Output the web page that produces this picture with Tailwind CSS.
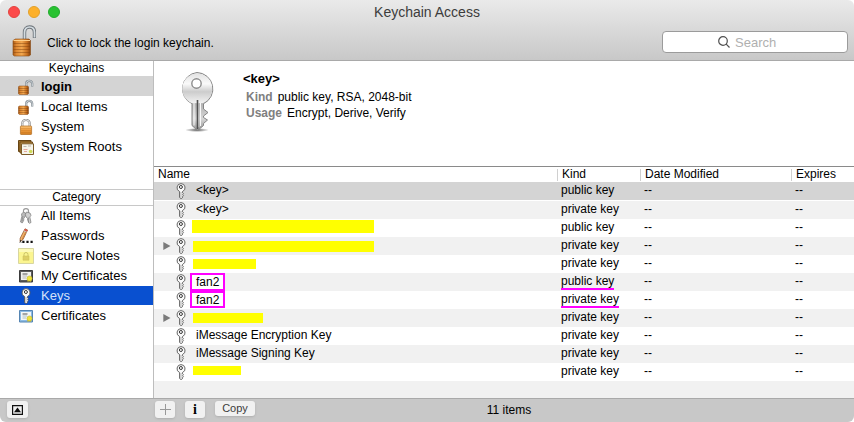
<!DOCTYPE html>
<html lang="en">
<head>
<meta charset="utf-8">
<meta name="viewport" content="width=device-width, initial-scale=1">
<title>Keychain Access</title>
<script src="https://cdn.jsdelivr.net/npm/@tailwindcss/browser@4"></script>
</head>
<body class="bg-white font-['Liberation_Sans',Arial,sans-serif] text-xs text-black">
<svg class="absolute size-0" aria-hidden="true">
  <defs>
    <linearGradient id="gold" x1="0" x2="1" y1="0" y2="0">
      <stop offset="0" stop-color="#a85a16"/><stop offset=".2" stop-color="#e08a34"/><stop offset=".5" stop-color="#f2a850"/><stop offset=".8" stop-color="#c87020"/><stop offset="1" stop-color="#84400c"/>
    </linearGradient>
    <linearGradient id="brass" x1="0" x2="0" y1="0" y2="1">
      <stop offset="0" stop-color="#fbc478"/><stop offset=".5" stop-color="#ee9b3c"/><stop offset="1" stop-color="#d07c20"/>
    </linearGradient>
    <linearGradient id="steel" x1="0" x2="0" y1="0" y2="1">
      <stop offset="0" stop-color="#e8e8e8"/><stop offset=".35" stop-color="#fafafa"/><stop offset=".55" stop-color="#b4b4b4"/><stop offset=".8" stop-color="#d6d6d6"/><stop offset="1" stop-color="#909090"/>
    </linearGradient>
    <linearGradient id="head" x1="0" x2="0" y1="0" y2="1">
      <stop offset="0" stop-color="#e2e2e2"/><stop offset=".35" stop-color="#fafafa"/><stop offset=".62" stop-color="#cccccc"/><stop offset="1" stop-color="#f2f2f2"/>
    </linearGradient>
    <radialGradient id="shade"><stop offset="0" stop-color="#333" stop-opacity=".8"/><stop offset="1" stop-color="#333" stop-opacity="0"/></radialGradient>
    <symbol id="open-lock" viewBox="0 0 24 32">
      <path d="M12.500 15V7.500C12.500 3.700 14.500 2 17.500 2s5 2 5 5.500V13" fill="none" stroke="#6d747a" stroke-width="3.400"/>
      <path d="M12.500 15V7.500C12.500 3.700 14.500 2 17.500 2s5 2 5 5.500V12.500" fill="none" stroke="#d3dbe0" stroke-width="1.700"/>
      <path d="M1 15.500 3.500 14H17l1.500 1.500v14.500L17 31H2.500L1 30z" fill="url(#gold)" stroke="#8a4a12" stroke-width=".6"/>
      <path d="M1.500 18.500h16.500M1.500 21.500h16.500M1.500 24.500h16.500M1.500 27.500h16.500" stroke="#7d3f0c" stroke-opacity=".45"/>
      <path d="M1.500 15.500h16.500" stroke="#ffd08a"/>
    </symbol>
    <symbol id="small-open-lock" viewBox="0 0 16 16">
      <path d="M8.200 7.500V4.500C8.200 2.600 9.500 1.800 11.200 1.800s3 .9 3 2.700V7.500" fill="none" stroke="#7c858c" stroke-width="2.200"/>
      <path d="M8.200 7.500V4.500C8.200 2.600 9.500 1.800 11.200 1.800s3 .9 3 2.700V7" fill="none" stroke="#dfe5e9" stroke-width="1"/>
      <path d="M.4 7.700 1.500 7h8l1 .7v7l-1 .8H1.500l-1.100-.8z" fill="url(#gold)" stroke="#8a4a12" stroke-width=".5"/>
      <path d="M.6 9.500h9.700M.6 11.500h9.700M.6 13.500h9.700" stroke="#7d3f0c" stroke-opacity=".5" stroke-width=".8"/>
    </symbol>
    <symbol id="closed-lock" viewBox="0 0 16 16">
      <path d="M4.300 8V4.500a3.700 3.700 0 0 1 7.400 0V8" fill="none" stroke="#8b8b8b" stroke-width="2.200"/>
      <path d="M4.300 8V4.500a3.700 3.700 0 0 1 7.400 0V8" fill="none" stroke="#ececec" stroke-width="1"/>
      <rect x="2.400" y="7" width="11.200" height="8.500" rx=".7" fill="url(#brass)" stroke="#b06a1c" stroke-width=".7"/>
      <path d="M3 9.500h10M3 11.500h10M3 13.500h10" stroke="#b8681a" stroke-opacity=".4" stroke-width=".7"/>
    </symbol>
    <symbol id="roots" viewBox="0 0 16 16">
      <path d="M.5 1.500h12.500v11H.5z" fill="#a4762c" stroke="#664414"/>
      <path d="M2 3h12.500v11H2z" fill="#bd8f42" stroke="#6e4a18"/>
      <path d="M3.500 4.800h12V15.500h-12z" fill="#f6f4ea" stroke="#7c5c28"/>
      <path d="M5.500 7.500h3M10 7h3" stroke="#b9b9b0"/><path d="M5.500 10.500h4M6 12.500h3" stroke="#e6a89c"/>
      <circle cx="12.700" cy="12.500" r="1.800" fill="#cedb58"/>
    </symbol>
    <symbol id="keyring" viewBox="0 0 16 16">
      <circle cx="8" cy="3.200" r="2.600" fill="none" stroke="#999" stroke-width="1.100"/>
      <path d="M5.500 4 3.500 6 3.800 8.500 2.500 14l1.700 1 1-1.300-.3-1 1-.4-.2-1.600 1.300-2L8 5.500z" fill="#bcbcbc" stroke="#808080" stroke-width=".7"/>
      <path d="M8.500 4 12 5l1 2.300-1.200 1.700 1.200 5.500-1.700.8-1.300-1.300.5-1-1-.7.2-2L8 9 7.300 6.500z" fill="#cfcfcf" stroke="#777" stroke-width=".7"/>
      <path d="M10.500 9.500v4.500M5 8 3.800 13.500" stroke="#777" stroke-width=".6"/>
    </symbol>
    <symbol id="pencil" viewBox="0 0 16 16">
      <path d="m7 .8 2.600 1.200L5 11.500l-3 2.300.2-3.600z" fill="#f0b36c" stroke="#8d4d24" stroke-width=".7"/>
      <path d="m7 .8 2.600 1.200-.9 1.900-2.600-1.200z" fill="#d9584e"/>
      <path d="m6 2.900 2.600 1.200" stroke="#c4c4c4"/><path d="m4.200 11.200 3.700-7.500" stroke="#c9762e" stroke-width=".7"/><path d="m2 13.900.1-1.900 1.500.7z" fill="#222"/>
      <path d="M1 14.500h3" stroke="#aaa" stroke-width=".8"/>
      <path d="M4.300 12.700h2.200v2.200H4.300zM8.400 12.700h2.200v2.200H8.400zM12.500 12.700h2.200v2.200h-2.200z" fill="#111"/>
    </symbol>
    <symbol id="note" viewBox="0 0 16 16">
      <path d="M.5.500h15v15H.5z" fill="#fbf590" stroke="#d8d6a0"/>
      <path d="M1 1h14v3H1z" fill="#fdfab8"/>
      <path d="M6 8V6.500a2 2 0 0 1 4 0V8" fill="none" stroke="#c9c268"/>
      <path d="M5 8h6v4.200H5z" fill="#ddcf66" stroke="#c8bc55" stroke-width=".5"/>
    </symbol>
    <symbol id="my-cert" viewBox="0 0 16 16">
      <path d="M1.500 2.500h13v11.500h-13z" fill="#5c5c5c" stroke="#3c3c3c"/>
      <path d="M3 4h10v8H3z" fill="#f1f1ee"/>
      <path d="M4.500 6h5" stroke="#555"/><path d="M4.500 8h4.500M4.500 10h3.500" stroke="#aaa" stroke-width=".8"/>
      <path d="m9.800 11-.3 3 1.700-1 1.800 1-.3-3z" fill="#c9b72c"/><circle cx="11.500" cy="10.500" r="2.600" fill="#eee33c" stroke="#b5a52c" stroke-width=".5"/>
    </symbol>
    <symbol id="cert" viewBox="0 0 16 16">
      <path d="M1.500 2.500h13v11.500h-13z" fill="#8dbbe4" stroke="#5585b3"/>
      <path d="M3 4h10v8H3z" fill="#f4f7f6"/>
      <path d="M4.500 6h5" stroke="#555"/><path d="M4.500 8h4.500M4.500 10h3.500" stroke="#9fb4bd" stroke-width=".8"/>
      <path d="m9.800 11-.3 3 1.700-1 1.800 1-.3-3z" fill="#c9b72c"/><circle cx="11.500" cy="10.500" r="2.600" fill="#eee33c" stroke="#b5a52c" stroke-width=".5"/>
    </symbol>
    <symbol id="key" viewBox="0 0 10 16">
      <path d="M5 .6a4.100 4.100 0 0 1 1.500 7.900v1.300l.9.900-.8 1 .8 1.100-.9.900v.9L5.100 15.600 3.600 14.500v-6A4.100 4.100 0 0 1 5 .6z" fill="#fafafa" stroke="#555" stroke-width=".9"/>
      <circle cx="4.900" cy="4" r="1.500" fill="#fff" stroke="#333" stroke-width="1"/>
      <path d="M5 9v5" stroke="#8a8a8a" stroke-width=".6"/>
    </symbol>
    <symbol id="big-key" viewBox="0 0 36 62">
      <ellipse cx="18" cy="59" rx="12" ry="2" fill="url(#shade)"/>
      <path d="M18 1.500a16.400 16.400 0 0 1 6.500 31.200V38l4.500 3.500-4.500 3.500v1.500l4 2.500-4 3.500v2L18.500 59.500 13 54.500V32.700A16.400 16.400 0 0 1 18 1.500z" fill="url(#steel)" stroke="#858585"/>
      <path d="M18 2.500a15.400 15.400 0 0 1 6 29.500H12.500A15.400 15.400 0 0 1 18 2.500z" fill="url(#head)"/>
      <path d="M15 32v22.500M21.500 32v23" stroke="#f8f8f8"/>
      <path d="M18.500 29v29" stroke="#505050" stroke-width="1.600"/><path d="M20 32v24" stroke="#bcbcbc"/>
      <circle cx="17.500" cy="12.500" r="4.700" fill="#fff" stroke="#8c8c8c" stroke-width="1.400"/>
    </symbol>
  </defs>
</svg>

<div class="flex h-screen flex-col overflow-hidden rounded-md bg-white">
  <header class="flex-none border-b border-[#a9a9a9] bg-linear-to-b from-[#eaeaea] to-[#c8c8c8]">
    <div class="grid h-6 grid-cols-3 items-center">
      <div class="flex gap-2 pl-2">
        <button aria-label="Close" class="size-3 rounded-full border border-[#e2443f] bg-[#fc4a4a]"></button>
        <button aria-label="Minimize" class="size-3 rounded-full border border-[#e2a02b] bg-[#fdb02a]"></button>
        <button aria-label="Zoom" class="size-3 rounded-full border border-[#20ab2c] bg-[#28c231]"></button>
      </div>
      <h1 class="text-center text-sm leading-6 text-[#3c3c3c]">Keychain Access</h1>
    </div>
    <div class="flex h-9 items-center justify-between pr-1.5 pl-3">
      <button class="flex items-center gap-[11px] pb-0.5">
        <svg class="h-8 w-6" aria-hidden="true"><use href="#open-lock"/></svg>
        <span class="pt-1">Click to lock the login keychain.</span>
      </button>
      <div class="relative">
        <svg class="absolute top-[5px] left-14 size-3" viewBox="0 0 12 12" fill="none" stroke="#505050" stroke-width="1.200" aria-hidden="true"><circle cx="5" cy="5" r="4.300"/><path d="m8.200 8.200 3.300 3.300"/></svg>
        <input type="search" aria-label="Search" placeholder="Search" class="block h-[22px] w-[186px] rounded-[4px] border border-[#9b9b9b] bg-white pl-[72px] text-[13px] outline-none placeholder:text-[#b0b0b0]">
      </div>
    </div>
  </header>

  <div class="flex min-h-0 flex-1">
    <nav class="flex w-[154px] flex-none flex-col border-r border-[#bdbdbd] text-[13px] leading-5">
      <section class="h-32">
        <h2 class="text-center text-xs leading-[15px]">Keychains</h2>
        <ul>
          <li><button class="flex h-5 w-full items-center gap-[7px] bg-[#d4d4d4] pt-px pl-[18px] font-bold"><svg class="size-4" aria-hidden="true"><use href="#small-open-lock"/></svg>login</button></li>
          <li><button class="flex h-5 w-full items-center gap-[7px] pt-px pl-[18px]"><svg class="size-4" aria-hidden="true"><use href="#small-open-lock"/></svg>Local Items</button></li>
          <li><button class="flex h-5 w-full items-center gap-[7px] pt-px pl-[18px]"><svg class="size-4" aria-hidden="true"><use href="#closed-lock"/></svg>System</button></li>
          <li><button class="flex h-5 w-full items-center gap-[7px] pt-px pl-[18px]"><svg class="size-4" aria-hidden="true"><use href="#roots"/></svg>System Roots</button></li>
        </ul>
      </section>
      <section>
        <h2 class="border-y border-[#c8c8c8] text-center text-xs leading-[15px]">Category</h2>
        <ul>
          <li><button class="flex h-5 w-full items-center gap-[7px] pl-[18px]"><svg class="size-4" aria-hidden="true"><use href="#keyring"/></svg>All Items</button></li>
          <li><button class="flex h-5 w-full items-center gap-[7px] pl-[18px]"><svg class="size-4" aria-hidden="true"><use href="#pencil"/></svg>Passwords</button></li>
          <li><button class="flex h-5 w-full items-center gap-[7px] pl-[18px]"><svg class="size-4" aria-hidden="true"><use href="#note"/></svg>Secure Notes</button></li>
          <li><button class="flex h-5 w-full items-center gap-[7px] pl-[18px]"><svg class="size-4" aria-hidden="true"><use href="#my-cert"/></svg>My Certificates</button></li>
          <li><button class="flex h-5 w-full items-center gap-[7px] border-b border-white bg-[#0950d0] pl-[18px] text-[#d5e2fa]"><svg class="size-4" aria-hidden="true"><use href="#key"/></svg>Keys</button></li>
          <li><button class="flex h-5 w-full items-center gap-[7px] pl-[18px]"><svg class="size-4" aria-hidden="true"><use href="#cert"/></svg>Certificates</button></li>
        </ul>
      </section>
    </nav>

    <main class="flex min-w-0 flex-1 flex-col">
      <section class="flex h-[106px] flex-none gap-7 border-b border-[#8a8a8a] pt-[10px] pl-[25px]">
        <svg class="h-[62px] w-9" aria-hidden="true"><use href="#big-key"/></svg>
        <div class="leading-4">
          <h2 class="text-[13px] font-bold">&lt;key&gt;</h2>
          <dl class="pt-0.5 pl-[3px]">
            <div class="flex gap-[5px]"><dt class="font-bold text-[#808080]">Kind</dt><dd>public key, RSA, 2048-bit</dd></div>
            <div class="flex gap-[5px]"><dt class="font-bold text-[#808080]">Usage</dt><dd>Encrypt, Derive, Verify</dd></div>
          </dl>
        </div>
      </section>

      <div class="flex min-h-0 flex-1 flex-col overflow-hidden">
        <table class="w-full flex-none table-fixed border-collapse text-left leading-[15px]">
          <colgroup><col><col class="w-[83px]"><col class="w-[151px]"><col class="w-[63px]"></colgroup>
          <thead>
            <tr class="h-[15px]">
              <th class="p-0 pl-1 font-normal">Name</th>
              <th class="p-0 font-normal"><div class="flex items-center gap-1"><span class="h-3 w-px bg-[#d0d0d0]"></span>Kind</div></th>
              <th class="p-0 font-normal"><div class="flex items-center gap-1"><span class="h-3 w-px bg-[#d0d0d0]"></span>Date Modified</div></th>
              <th class="p-0 font-normal"><div class="flex items-center gap-1"><span class="h-3 w-px bg-[#d0d0d0]"></span>Expires</div></th>
            </tr>
          </thead>
          <tbody class="[&_td]:p-0 [&_td+td]:pl-1">
            <tr class="h-[18px] border-b border-white bg-[#d4d4d4]">
              <td><div class="flex h-[17px] items-center gap-[10px] pl-[22px]"><svg class="h-4 w-[10px]" aria-hidden="true"><use href="#key"/></svg>&lt;key&gt;</div></td><td>public key</td><td>--</td><td>--</td>
            </tr>
            <tr class="h-[18px] bg-[#f1f1f1]">
              <td><div class="flex h-[18px] items-center gap-[10px] pl-[22px]"><svg class="h-4 w-[10px]" aria-hidden="true"><use href="#key"/></svg>&lt;key&gt;</div></td><td>private key</td><td>--</td><td>--</td>
            </tr>
            <tr class="h-[18px]">
              <td><div class="flex h-[18px] items-center gap-[6px] pl-[22px]"><svg class="h-4 w-[10px]" aria-hidden="true"><use href="#key"/></svg><span class="mb-0.5 h-[13px] w-[182px] bg-[#ffff00]"></span></div></td><td>public key</td><td>--</td><td>--</td>
            </tr>
            <tr class="h-[18px] bg-[#f1f1f1]">
              <td><div class="flex h-[18px] items-center gap-[7px] pl-[9px]"><button aria-label="Expand" class="-mr-[2px] h-2 w-2"><svg class="size-2" viewBox="0 0 8 8" aria-hidden="true"><path d="M.3 0v8L7.500 4z" fill="#7b7b7b"/></svg></button><svg class="h-4 w-[10px]" aria-hidden="true"><use href="#key"/></svg><span class="mt-0.5 h-[11px] w-[181px] bg-[#ffff00]"></span></div></td><td>private key</td><td>--</td><td>--</td>
            </tr>
            <tr class="h-[18px]">
              <td><div class="flex h-[18px] items-center gap-[7px] pl-[22px]"><svg class="h-4 w-[10px]" aria-hidden="true"><use href="#key"/></svg><span class="h-[10px] w-[63px] bg-[#ffff00]"></span></div></td><td>private key</td><td>--</td><td>--</td>
            </tr>
            <tr class="h-[18px] bg-[#f1f1f1]">
              <td><div class="flex h-[18px] items-center gap-[4px] pl-[22px]"><svg class="h-4 w-[10px]" aria-hidden="true"><use href="#key"/></svg><span class="h-[18px] w-[35px] border-2 border-[#ff00ff] bg-white pl-1 leading-[14px]">fan2</span></div></td><td><span class="relative">public key<span class="absolute inset-x-0 -bottom-[2px] h-0.5 bg-[#ff00ff]"></span></span></td><td>--</td><td>--</td>
            </tr>
            <tr class="h-[18px]">
              <td><div class="flex h-[18px] items-center gap-[4px] pl-[22px]"><svg class="h-4 w-[10px]" aria-hidden="true"><use href="#key"/></svg><span class="h-[17px] w-[35px] border-2 border-[#ff00ff] pl-1 leading-[14px]">fan2</span></div></td><td><span class="relative">private key<span class="absolute inset-x-0 -bottom-[2px] h-0.5 bg-[#ff00ff]"></span></span></td><td>--</td><td>--</td>
            </tr>
            <tr class="h-[18px] bg-[#f1f1f1]">
              <td><div class="flex h-[18px] items-center gap-[7px] pl-[9px]"><button aria-label="Expand" class="-mr-[2px] h-2 w-2"><svg class="size-2" viewBox="0 0 8 8" aria-hidden="true"><path d="M.3 0v8L7.500 4z" fill="#7b7b7b"/></svg></button><svg class="h-4 w-[10px]" aria-hidden="true"><use href="#key"/></svg><span class="h-[10px] w-[70px] bg-[#ffff00]"></span></div></td><td>private key</td><td>--</td><td>--</td>
            </tr>
            <tr class="h-[18px]">
              <td><div class="flex h-[18px] items-center gap-[10px] pl-[22px]"><svg class="h-4 w-[10px]" aria-hidden="true"><use href="#key"/></svg>iMessage Encryption Key</div></td><td>private key</td><td>--</td><td>--</td>
            </tr>
            <tr class="h-[18px] bg-[#f1f1f1]">
              <td><div class="flex h-[18px] items-center gap-[10px] pl-[22px]"><svg class="h-4 w-[10px]" aria-hidden="true"><use href="#key"/></svg>iMessage Signing Key</div></td><td>private key</td><td>--</td><td>--</td>
            </tr>
            <tr class="h-[18px]">
              <td><div class="flex h-[18px] items-center gap-[7px] pl-[22px]"><svg class="h-4 w-[10px]" aria-hidden="true"><use href="#key"/></svg><span class="mb-0.5 h-[9px] w-12 bg-[#ffff00]"></span></div></td><td>private key</td><td>--</td><td>--</td>
            </tr>
          </tbody>
        </table>
        <div class="flex-1 bg-[#f1f1f1]"></div>
      </div>
    </main>
  </div>

  <footer class="flex h-6 flex-none items-start border-t border-[#a9a9a9] bg-[#c8c8c8] pt-0.5">
    <div class="w-[154px] flex-none pl-[7px]">
      <button aria-label="Show summary" class="flex h-[17px] w-[21px] items-center justify-center rounded-[3px] bg-[#f1f1f1] shadow-sm">
        <svg class="h-[10px] w-[11px]" viewBox="0 0 11 10" aria-hidden="true"><path d="M.6.600h9.800v8.800H.6z" fill="none" stroke="#111" stroke-width="1.200"/><path d="M2 7.200 5.500 2.600 9 7.200z" fill="#111"/></svg>
      </button>
    </div>
    <div class="relative flex flex-1 gap-[10px] pl-px">
      <button aria-label="Add" class="flex h-[17px] w-5 items-center justify-center rounded-[3px] bg-[#f1f1f1] shadow-sm">
        <svg class="size-[11px]" viewBox="0 0 11 11" stroke="#999" aria-hidden="true"><path d="M5.500 0v11M0 5.500h11"/></svg>
      </button>
      <button aria-label="Get info" class="h-[17px] w-5 rounded-[3px] bg-[#f1f1f1] font-['Liberation_Serif',serif] text-sm leading-[17px] font-bold shadow-sm">i</button>
      <button class="h-[15px] w-10 rounded-[3px] bg-[#f1f1f1] text-[11px] leading-[15px] text-[#3c3c3c] shadow-sm">Copy</button>
      <p class="pointer-events-none absolute inset-x-0 top-px pl-[10px] text-center leading-4">11 items</p>
    </div>
  </footer>
</div>
</body>
</html>
